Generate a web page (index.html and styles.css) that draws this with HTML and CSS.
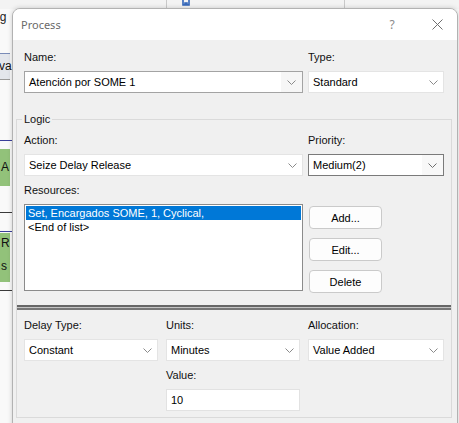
FILE: index.html
```html
<!DOCTYPE html>
<html lang="es">
<head>
<meta charset="utf-8">
<title>Process</title>
<link rel="stylesheet" href="styles.css">
</head>
<body>
<div class="desktop">
  <!-- flowchart canvas behind the dialog -->
  <div class="canvas">
    <div class="canvas-strip">
      <span class="vline" style="left:166px"></span>
      <span class="vline" style="left:344px"></span>
      <svg class="strip-icon" width="8" height="7" viewBox="0 0 8 7"><path d="M1 0v5h6V0M3 5V3h2v2" fill="none" stroke="#2f63b8" stroke-width="1.6"/></svg>
    </div>
    <span class="node-text t-ig">ig</span>
    <div class="node node-gray"><span>va</span></div>
    <span class="conn conn-blue" style="top:140px"></span>
    <div class="node node-green n1"><span>A</span></div>
    <span class="conn conn-dark" style="top:212px"></span>
    <span class="conn conn-blue" style="top:231px"></span>
    <div class="node node-green n2"><span>R</span><span>s</span></div>
    <span class="conn conn-dark" style="top:290px"></span>
  </div>

  <section class="dialog">
    <header class="titlebar">
      <span class="title">Process</span>
      <span class="tb-btn help">?</span>
      <span class="tb-btn close">
        <svg width="11" height="11" viewBox="0 0 11 11"><path d="M0.5 0.5l10 10M10.5 0.5l-10 10" stroke="#6e6e6e" stroke-width="1" fill="none"/></svg>
      </span>
    </header>

    <div class="content">
      <div class="row-name">
        <div class="field">
          <label>Name:</label>
          <div class="combo combo-edit"><span class="val">Atención por SOME 1</span><span class="arrow"><svg width="9" height="5" viewBox="0 0 9 5"><path d="M0.5 0.5l4 4 4-4" fill="none" stroke="#8a8a8a"/></svg></span></div>
        </div>
        <div class="field">
          <label>Type:</label>
          <div class="combo"><span class="val">Standard</span><span class="arrow"><svg width="9" height="5" viewBox="0 0 9 5"><path d="M0.5 0.5l4 4 4-4" fill="none" stroke="#8a8a8a"/></svg></span></div>
        </div>
      </div>

      <fieldset class="group">
        <legend>Logic</legend>
        <div class="logic">
          <div class="field">
            <label>Action:</label>
            <div class="combo"><span class="val">Seize Delay Release</span><span class="arrow"><svg width="9" height="5" viewBox="0 0 9 5"><path d="M0.5 0.5l4 4 4-4" fill="none" stroke="#8a8a8a"/></svg></span></div>
          </div>
          <div class="field">
            <label>Priority:</label>
            <div class="combo combo-focus"><span class="val">Medium(2)</span><span class="arrow"><svg width="9" height="5" viewBox="0 0 9 5"><path d="M0.5 0.5l4 4 4-4" fill="none" stroke="#6e6e6e"/></svg></span></div>
          </div>
          <div class="field">
            <label>Resources:</label>
            <div class="listbox">
              <div class="item selected">Set, Encargados SOME, 1, Cyclical,</div>
              <div class="item">&lt;End of list&gt;</div>
            </div>
          </div>
          <div class="buttons">
            <button class="btn">Add...</button>
            <button class="btn">Edit...</button>
            <button class="btn">Delete</button>
          </div>
        </div>

        <div class="separator"></div>

        <div class="delay">
          <div class="field">
            <label>Delay Type:</label>
            <div class="combo"><span class="val">Constant</span><span class="arrow"><svg width="9" height="5" viewBox="0 0 9 5"><path d="M0.5 0.5l4 4 4-4" fill="none" stroke="#8a8a8a"/></svg></span></div>
          </div>
          <div class="field">
            <label>Units:</label>
            <div class="combo"><span class="val">Minutes</span><span class="arrow"><svg width="9" height="5" viewBox="0 0 9 5"><path d="M0.5 0.5l4 4 4-4" fill="none" stroke="#8a8a8a"/></svg></span></div>
          </div>
          <div class="field">
            <label>Allocation:</label>
            <div class="combo"><span class="val">Value Added</span><span class="arrow"><svg width="9" height="5" viewBox="0 0 9 5"><path d="M0.5 0.5l4 4 4-4" fill="none" stroke="#8a8a8a"/></svg></span></div>
          </div>
          <div class="field value-field">
            <label>Value:</label>
            <div class="textbox">10</div>
          </div>
        </div>
      </fieldset>
    </div>
  </section>
</div>
</body>
</html>
```

FILE: styles.css
```css
* {
  box-sizing: border-box;
}

html, body {
  margin: 0;
  padding: 0;
}

body {
  width: 459px;
  height: 423px;
  overflow: hidden;
  font-family: "Liberation Sans", Arial, sans-serif;
  font-size: 11px;
  color: #000;
  background: #f8f8f8;
}

.desktop {
  position: relative;
  width: 459px;
  height: 423px;
  overflow: hidden;
  background: #f9f9f9;
}

/* ---------- background flowchart ---------- */
.canvas {
  position: absolute;
  inset: 0;
}

.canvas-strip {
  position: absolute;
  left: 0;
  top: 0;
  width: 459px;
  height: 9px;
  background: #f3f3f3;
}

.vline {
  position: absolute;
  top: 0;
  width: 1px;
  height: 9px;
  background: #c9c9c9;
}

.strip-icon {
  position: absolute;
  left: 182px;
  top: 0;
}

.node-text {
  position: absolute;
  font-size: 12px;
  color: #222;
}

.t-ig {
  left: -3px;
  top: 10px;
}

.node {
  position: absolute;
  left: -4px;
  width: 14px;
  font-size: 12px;
  color: #111;
}

.node-gray {
  top: 53px;
  height: 27px;
  background: #e3e6ec;
  border-top: 1px solid #7a8cb8;
  border-bottom: 1px solid #9a9a9a;
  padding: 5px 0 0 3px;
}

.node-green {
  background: #92c27a;
  padding-left: 5px;
}

.node-green.n1 {
  top: 149px;
  height: 37px;
  padding-top: 11px;
}

.node-green.n2 {
  top: 233px;
  height: 49px;
  padding-top: 3px;
  display: flex;
  flex-direction: column;
  gap: 9px;
}

.conn {
  position: absolute;
  left: 0;
  width: 12px;
  height: 1px;
}

.conn-blue {
  background: #3a3f9a;
}

.conn-dark {
  background: #3a3a3a;
}

/* ---------- dialog window ---------- */
.dialog {
  position: absolute;
  left: 12px;
  top: 8px;
  width: 446px;
  height: 430px;
  border: 1px solid #b2b2b2;
  border-radius: 8px 8px 0 0;
  background: #f0f0f0;
  box-shadow: 0 0 5px rgba(0, 0, 0, 0.18);
  overflow: hidden;
}

.titlebar {
  display: flex;
  align-items: center;
  height: 31px;
  padding-left: 8px;
  background: #fff;
}

.title {
  font-family: "Noto Sans", "Open Sans", sans-serif;
  font-size: 11px;
  color: #6a6a6a;
}

.tb-btn {
  display: flex;
  align-items: center;
  justify-content: center;
  width: 40px;
  height: 31px;
}

.help {
  margin-left: auto;
  margin-right: 5px;
  font-family: "Noto Sans", "Open Sans", sans-serif;
  font-size: 12px;
  color: #8a8a8a;
}

.content {
  padding: 10px 5px 0 3px;
}

.field label {
  display: block;
  line-height: 14px;
  margin-bottom: 7px;
  color: #111;
}

.row-name {
  display: grid;
  grid-template-columns: 279px 136px;
  column-gap: 5px;
  padding: 0 8px;
}

/* ---------- combo boxes ---------- */
.combo {
  display: flex;
  align-items: center;
  height: 22px;
  background: #fff;
  border: 1px solid #e4e4e4;
}

.combo .val {
  flex: 1;
  padding-left: 4px;
  white-space: nowrap;
  overflow: hidden;
}

.combo .arrow {
  display: flex;
  align-items: center;
  justify-content: center;
  width: 19px;
  height: 100%;
}

.combo-edit {
  border-color: #a3a3a3;
}

.combo-edit .arrow {
  width: 21px;
  background: #f6f6f6;
}

.combo-focus {
  border-color: #7a7a7a;
}

.combo-focus .arrow {
  width: 21px;
  background: #f8f8f8;
}

.textbox {
  display: flex;
  align-items: center;
  height: 22px;
  padding-left: 4px;
  background: #fff;
  border: 1px solid #e2e2e2;
}

/* ---------- group box ---------- */
.group {
  margin: 19px 0 0;
  padding: 7px 7px 6px;
  min-width: 0;
  border: 1px solid #dadada;
}

.group legend {
  padding: 0 2px;
  margin-left: -2px;
  line-height: 14px;
  color: #111;
}

.logic {
  display: grid;
  grid-template-columns: 279px 136px;
  column-gap: 5px;
  row-gap: 7px;
}

.listbox {
  height: 87px;
  padding: 1px 1px;
  background: #fff;
  border: 1px solid #8b8b8b;
}

.listbox .item {
  line-height: 14px;
  padding-left: 2px;
  white-space: nowrap;
}

.listbox .selected {
  background: #0078d7;
  color: #fff;
}

.buttons {
  display: flex;
  flex-direction: column;
  gap: 9px;
  padding: 23px 0 0 1px;
}

.btn {
  width: 73px;
  height: 23px;
  padding: 0;
  font-family: "Liberation Sans", Arial, sans-serif;
  font-size: 11px;
  color: #000;
  background: #fdfdfd;
  border: 1px solid #cacaca;
  border-radius: 4px;
}

.separator {
  height: 5px;
  margin: 12px -7px 0;
  background: #c4c4c4;
  border-top: 2px solid #666;
  border-bottom: 2px solid #777;
}

.delay {
  display: grid;
  grid-template-columns: 134px 134px 136px;
  column-gap: 8px;
  row-gap: 7px;
  margin-top: 8px;
}

.value-field {
  grid-column: 2;
}
```
